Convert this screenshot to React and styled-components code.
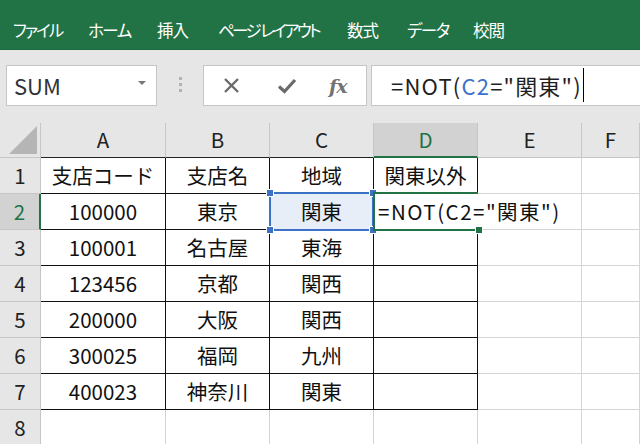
import React from "react";
import styled, { createGlobalStyle } from "styled-components";

const Global = createGlobalStyle`
  html, body { margin: 0; padding: 0; background: #ffffff; overflow: hidden; }
  body { font-family: "Noto Sans CJK JP", "Noto Sans", sans-serif; }
`;

const Page = styled.div`
  width: 640px;
  height: 444px;
  overflow: hidden;
  display: flex;
  flex-direction: column;
`;

const Ribbon = styled.div`
  height: 50px;
  flex: none;
  background: #217346;
  display: flex;
  align-items: center;
  padding: 10px 0 0 13px;
  box-sizing: border-box;
  border-bottom: 1px solid #1d6a40;
`;

const Tab = styled.div`
  width: ${(p) => p.$w}px;
  flex: none;
  color: #ffffff;
  font-size: 16.5px;
  font-feature-settings: "palt";
  letter-spacing: ${(p) => p.$ls}px;
  white-space: nowrap;
`;

const FormulaArea = styled.div`
  height: 73px;
  flex: none;
  background: #e6e6e6;
  display: flex;
  align-items: flex-start;
  padding: 15px 0 0 6px;
  box-sizing: border-box;
`;

const NameBox = styled.div`
  width: 151px;
  height: 41px;
  box-sizing: border-box;
  background: #fff;
  border: 1px solid #c6c6c6;
  display: flex;
  align-items: center;
  justify-content: space-between;
  padding: 0 10px 2px 7px;
  font-size: 22px;
  color: #2f3338;
`;

const Caret = styled.div`
  width: 0;
  height: 0;
  border-left: 4px solid transparent;
  border-right: 4px solid transparent;
  border-top: 4px solid #777;
  margin-top: -4px;
`;

const Grip = styled.div`
  width: 46px;
  height: 41px;
  display: flex;
  flex-direction: column;
  align-items: center;
  justify-content: center;
  gap: 3px;
  padding-bottom: 3px;
  box-sizing: border-box;
`;

const Dot = styled.span`
  width: 3px;
  height: 3px;
  background: #b3b3b3;
`;

const ButtonBox = styled.div`
  width: 164px;
  height: 41px;
  box-sizing: border-box;
  background: #fff;
  border: 1px solid #c6c6c6;
  display: flex;
  align-items: center;
  padding-left: 19px;
`;

const IconSlot = styled.div`
  width: ${(p) => p.$w}px;
  display: flex;
  align-items: center;
  justify-content: flex-start;
`;

const Fx = styled.span`
  font-family: "DejaVu Serif", "Liberation Serif", serif;
  font-style: italic;
  font-weight: bold;
  font-size: 19px;
  color: #727272;
  letter-spacing: -1px;
`;

const FormulaInput = styled.div`
  flex: 1;
  margin-left: 4px;
  height: 41px;
  box-sizing: border-box;
  background: #fff;
  border: 1px solid #c6c6c6;
  border-right: none;
  display: flex;
  align-items: center;
  padding: 0 0 2px 19px;
  font-size: 22px;
  letter-spacing: 1.2px;
  color: #1f1f1f;
  white-space: nowrap;
`;

const Ref = styled.span`
  color: #3a72c8;
`;

const Cursor = styled.span`
  display: inline-block;
  width: 1.5px;
  height: 34px;
  background: #000;
  margin-left: 1px;
`;

const Sheet = styled.div`
  flex: 1;
  display: grid;
  grid-template-columns: 41px 125px 104px 104px 104px 104px 1fr;
  grid-template-rows: 35px repeat(8, 36px);
  background: #fff;
  overflow: hidden;
`;

const Cell = styled.div`
  position: relative;
  box-sizing: border-box;
  display: flex;
  align-items: center;
  justify-content: center;
  background: ${(p) => p.$bg || "#fff"};
  border-right: ${(p) => p.$rw || 1}px solid ${(p) => p.$r || "#d4d4d4"};
  border-bottom: ${(p) => p.$bw || 1}px solid ${(p) => p.$b || "#d4d4d4"};
  color: ${(p) => p.$color || "#111"};
  font-size: 20.5px;
  white-space: nowrap;
  padding-bottom: 2px;
`;

const Corner = styled(Cell)`
  background: #e6e6e6;
`;

const Triangle = styled.div`
  position: absolute;
  right: 3px;
  bottom: 3px;
  width: 0;
  height: 0;
  border-left: 28px solid transparent;
  border-bottom: 28px solid #b5b5b5;
`;

const RangeSel = styled.div`
  position: absolute;
  left: -1px;
  top: -2px;
  right: -1px;
  bottom: -2px;
  border: 2px solid #3b72c6;
  background: #e8eef8;
  display: flex;
  align-items: center;
  justify-content: center;
  padding-bottom: 2px;
  box-sizing: border-box;
  color: #111;
  z-index: 1;
`;

const Handle = styled.span`
  position: absolute;
  width: 6px;
  height: 6px;
  background: ${(p) => p.$c};
  border: 1px solid #fff;
  ${(p) => (p.$x === "l" ? "left: -5px;" : "right: -5px;")}
  ${(p) => (p.$y === "t" ? "top: -5px;" : "bottom: -5px;")}
  z-index: 3;
`;

const Editor = styled.div`
  position: absolute;
  left: -1px;
  top: -2px;
  width: 105px;
  bottom: -2px;
  border: 2px solid #217346;
  border-right: none;
  box-sizing: border-box;
  display: flex;
  align-items: center;
  padding: 0 0 2px 3px;
  color: #111;
  z-index: 2;
  background: #fff;
  overflow: visible;
`;

const EditText = styled.span`
  background: #fff;
  white-space: nowrap;
  letter-spacing: 1.5px;
`;

const cols = ["A", "B", "C", "D", "E", "F"];
const data = [
  ["支店コード", "支店名", "地域", "関東以外"],
  ["100000", "東京", "関東", ""],
  ["100001", "名古屋", "東海", ""],
  ["123456", "京都", "関西", ""],
  ["200000", "大阪", "関西", ""],
  ["300025", "福岡", "九州", ""],
  ["400023", "神奈川", "関東", ""],
  ["", "", "", ""],
];

const tabs = [
  ["ファイル", 75, -2],
  ["ホーム", 69, -1.5],
  ["挿入", 61, -1],
  ["ページ レイアウト", 129, -2.6],
  ["数式", 60, -1],
  ["データ", 66, -1.5],
  ["校閲", 80, -1],
];

export default function App() {
  const cells = [];
  cells.push(
    <Corner key="corner" $r="#c6c6c6" $b="#c6c6c6">
      <Triangle />
    </Corner>
  );
  cols.forEach((c, i) => {
    const sel = c === "D";
    const inRange = i < 4;
    cells.push(
      <Cell
        key={"h" + c}
        $bg={sel ? "#d2d2d2" : "#e6e6e6"}
        $r="#c6c6c6"
        $b={sel ? "#217346" : inRange ? "#222" : "#c6c6c6"}
        $bw={sel ? 2 : 1}
        $color={sel ? "#217346" : "#222"}
      >
        {c}
      </Cell>
    );
  });
  data.forEach((row, r) => {
    const rowNum = r + 1;
    const selRow = rowNum === 2;
    cells.push(
      <Cell
        key={"r" + rowNum}
        $bg={selRow ? "#d2d2d2" : "#e6e6e6"}
        $r={selRow ? "#217346" : "#c6c6c6"}
        $rw={selRow ? 2 : 1}
        $b="#c6c6c6"
        $color={selRow ? "#217346" : "#222"}
      >
        {rowNum}
      </Cell>
    );
    cols.forEach((c, ci) => {
      const inBox = ci < 4 && rowNum <= 7;
      const borderR = inBox ? "#111" : "#d4d4d4";
      const borderB = inBox ? "#111" : "#d4d4d4";
      const text = ci < 4 ? row[ci] : "";
      let content = text;
      if (rowNum === 2 && c === "C") {
        content = (
          <RangeSel>
            関東
            <Handle $c="#3b72c6" $x="l" $y="t" />
            <Handle $c="#3b72c6" $x="r" $y="t" />
            <Handle $c="#3b72c6" $x="l" $y="b" />
            <Handle $c="#3b72c6" $x="r" $y="b" />
          </RangeSel>
        );
      }
      if (rowNum === 2 && c === "D") {
        content = (
          <Editor>
            <EditText>=NOT(C2="関東")</EditText>
            <Handle $c="#217346" $x="r" $y="b" />
          </Editor>
        );
      }
      cells.push(
        <Cell key={c + rowNum} $r={borderR} $b={borderB}>
          {content}
        </Cell>
      );
    });
  });

  return (
    <Page>
      <Global />
      <Ribbon>
        {tabs.map(([t, w, ls]) => (
          <Tab key={t} $w={w} $ls={ls}>
            {t}
          </Tab>
        ))}
      </Ribbon>
      <FormulaArea>
        <NameBox>
          <span>SUM</span>
          <Caret />
        </NameBox>
        <Grip>
          <Dot />
          <Dot />
          <Dot />
        </Grip>
        <ButtonBox>
          <IconSlot $w={54}>
            <svg width="17" height="15" viewBox="0 0 17 15">
              <path d="M2 1 L15 14 M15 1 L2 14" stroke="#6b6b6b" strokeWidth="2.4" fill="none" />
            </svg>
          </IconSlot>
          <IconSlot $w={52}>
            <svg width="20" height="16" viewBox="0 0 20 16">
              <path d="M2 8.5 L7.5 13.5 L18 2" stroke="#6b6b6b" strokeWidth="3.2" fill="none" />
            </svg>
          </IconSlot>
          <IconSlot $w={30}>
            <Fx>fx</Fx>
          </IconSlot>
        </ButtonBox>
        <FormulaInput>
          <span>
            =NOT(<Ref>C2</Ref>="関東")
          </span>
          <Cursor />
        </FormulaInput>
      </FormulaArea>
      <Sheet>{cells}</Sheet>
    </Page>
  );
}
